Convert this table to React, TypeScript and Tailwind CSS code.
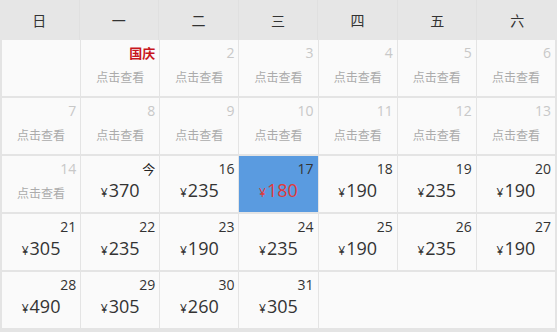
import React from 'react';

type Day = {
  date: number;
  label?: string;
  price?: number;
  selected?: boolean;
};

const weekdays = ['日', '一', '二', '三', '四', '五', '六'];

const prices: Record<number, number> = {
  15: 370, 16: 235, 17: 180, 18: 190, 19: 235, 20: 190,
  21: 305, 22: 235, 23: 190, 24: 235, 25: 190, 26: 235, 27: 190,
  28: 490, 29: 305, 30: 260, 31: 305,
};

const days: Day[] = Array.from({ length: 31 }, (_, i) => {
  const date = i + 1;
  return {
    date,
    label: date === 1 ? '国庆' : date === 15 ? '今' : undefined,
    price: prices[date],
    selected: date === 17,
  };
});

function DayCell({ day }: { day: Day }) {
  const active = day.price !== undefined;
  const bg = day.selected ? 'bg-[#5a9be0]' : 'bg-[#fafafa]';

  let head: React.ReactNode;
  if (day.label === '国庆') {
    head = <span className="text-[13px] font-bold text-[#c8161d]">国庆</span>;
  } else if (day.label) {
    head = <span className="text-[13px] text-[#222]">{day.label}</span>;
  } else {
    head = (
      <span className={active ? 'text-[#333]' : 'text-[#c8c8c8]'}>{day.date}</span>
    );
  }

  return (
    <div className={`${bg} h-[56px] flex flex-col`}>
      <div className="h-[22px] pt-[3px] pr-[4px] text-right text-[14px] leading-[20px]">
        {head}
      </div>
      {active ? (
        <div
          className={`text-center leading-[24px] ${
            day.selected ? 'text-[#e03a3a]' : 'text-[#333]'
          }`}
        >
          <span className="text-[12px] mr-[1px]">¥</span>
          <span className="text-[18px]">{day.price}</span>
        </div>
      ) : (
        <div className="text-center text-[12px] leading-[24px] mt-[4px] text-[#ababab]">
          点击查看
        </div>
      )}
    </div>
  );
}

export default function App() {
  return (
    <div
      className="w-[557px] h-[332px] bg-[#e4e4e4] px-[2px]"
      style={{ fontFamily: '"Open Sans", "Noto Sans CJK SC", sans-serif' }}
    >
      {/* Weekday header */}
      <div className="grid grid-cols-7 h-[40px] -mx-[2px] bg-[#e6e6e6]">
        {weekdays.map((w, i) => (
          <div
            key={w}
            className={`flex items-center justify-center text-[14px] text-[#333] ${
              i < 6 ? 'border-r border-[#e0e0e0]' : ''
            }`}
          >
            {w}
          </div>
        ))}
      </div>

      {/* Days */}
      <div className="grid grid-cols-7 gap-x-px gap-y-[2px]">
        <div className="bg-[#fafafa] h-[56px]" />
        {days.map((d) => (
          <DayCell key={d.date} day={d} />
        ))}
        <div className="bg-[#fafafa] h-[56px] col-span-3" />
      </div>
    </div>
  );
}
